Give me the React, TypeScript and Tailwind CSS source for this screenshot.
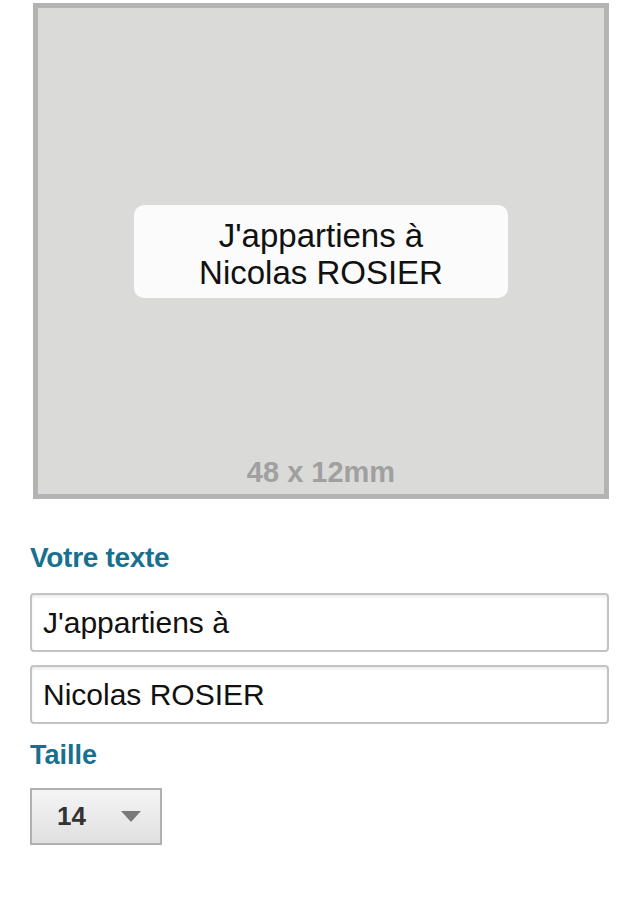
import React from "react";

export default function App() {
  const font = { fontFamily: '"Liberation Sans", Arial, sans-serif' };
  return (
    <div className="w-[640px] h-[923px] bg-white flex flex-col" style={font}>
      <div className="ml-[33px] mt-[3px] w-[576px] h-[496px] border-[5px] border-[#b3b3b3] bg-[#dadbd9] grid grid-rows-[1fr_auto_1fr]">
        <div />
        <div className="flex justify-center">
          <div className="w-[374px] h-[93px] rounded-[10px] bg-[#fbfbfb] flex flex-col items-center justify-center pt-[6px] text-[33px] leading-[37px] text-[#111]">
            <span>J'appartiens à</span>
            <span>Nicolas ROSIER</span>
          </div>
        </div>
        <div className="flex items-end justify-center pb-[6px]">
          <span className="text-[29px] leading-[32px] font-bold text-[#a0a0a0]">48 x 12mm</span>
        </div>
      </div>

      <div className="pl-[30px] flex flex-col">
        <div className="mt-[44px] h-[30px] flex items-center text-[28px] font-bold text-[#18708f] tracking-[-0.3px]">
          Votre texte
        </div>
        <div className="mt-[20px] w-[579px] h-[59px] border-2 border-[#c3c3c3] rounded-[4px] bg-white shadow-[inset_0_2px_3px_rgba(0,0,0,0.08)] flex items-center pl-[11px] text-[30px] text-[#111]">
          J'appartiens à
        </div>
        <div className="mt-[13px] w-[579px] h-[59px] border-2 border-[#c3c3c3] rounded-[4px] bg-white shadow-[inset_0_2px_3px_rgba(0,0,0,0.08)] flex items-center pl-[11px] text-[30px] text-[#111]">
          Nicolas ROSIER
        </div>
        <div className="mt-[16px] h-[30px] flex items-center text-[27px] font-bold text-[#18708f]">
          Taille
        </div>
        <div className="mt-[18px] w-[132px] h-[57px] border-2 border-[#b0b0b0] bg-gradient-to-b from-[#f5f5f5] to-[#e0e0e0] flex items-center pl-[25px]">
          <span className="text-[26px] font-bold text-[#333]">14</span>
          <svg className="ml-[35px]" width="20" height="11" viewBox="0 0 20 11">
            <polygon points="0,0 20,0 10,11" fill="#7a7a7a" />
          </svg>
        </div>
      </div>
    </div>
  );
}
